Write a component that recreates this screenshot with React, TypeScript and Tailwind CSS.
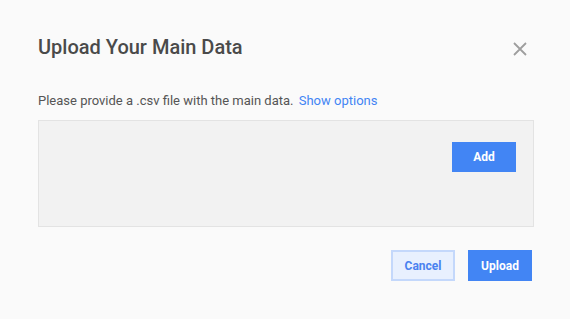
export default function App() {
  return (
    <div className="h-[319px] w-[570px] bg-[#fafafa] font-['Roboto',sans-serif]">
      <div className="flex flex-col pl-[38px] pr-[36px] pt-[34px]">
        <div className="flex items-center justify-between">
          <h1 className="text-[20px] font-medium leading-[26px] text-[#4a4a4a]">Upload Your Main Data</h1>
          <button type="button" className="mr-[7px] mt-[4px] text-[#9e9e9e]">
            <svg width="14" height="14" viewBox="0 0 14 14">
              <path d="M1 1L13 13M13 1L1 13" stroke="currentColor" strokeWidth="1.8" />
            </svg>
          </button>
        </div>
        <p className="mt-[32px] text-[13px] leading-[18px] text-[#555]">
          Please provide a .csv file with the main data.{' '}
          <span className="ml-[2px] text-[#4285f4]">Show options</span>
        </p>
        <div className="mt-[10px] flex h-[107px] justify-end border border-[#e3e3e3] bg-[#f2f2f2] pr-[17px] pt-[21px]">
          <button
            type="button"
            className="h-[30px] w-[64px] bg-[#4285f4] text-[12px] font-bold text-white"
          >
            Add
          </button>
        </div>
        <div className="mt-[23px] flex justify-end gap-[13px] pr-[2px]">
          <button
            type="button"
            className="h-[31px] w-[64px] border-2 border-[#c4d8fb] bg-[#e8f0fe] text-[12px] font-bold text-[#4a82f0]"
          >
            Cancel
          </button>
          <button
            type="button"
            className="h-[31px] w-[64px] bg-[#4285f4] text-[12px] font-bold text-white"
          >
            Upload
          </button>
        </div>
      </div>
    </div>
  )
}
